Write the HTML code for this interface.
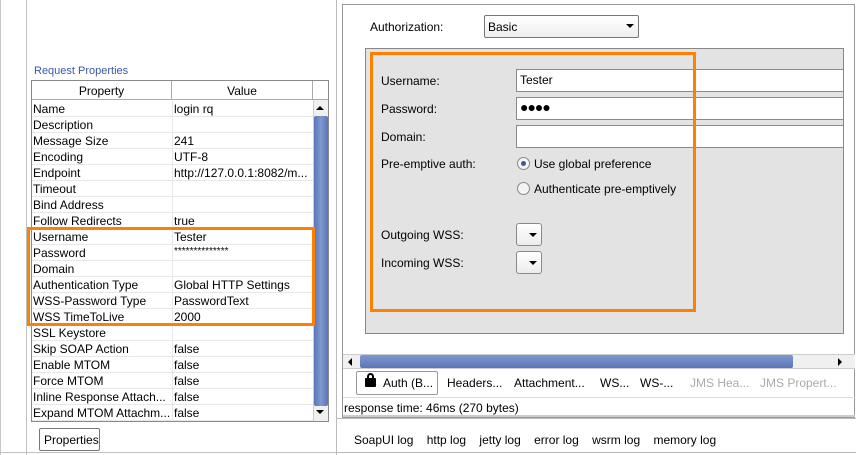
<!DOCTYPE html>
<html><head><style>
*{margin:0;padding:0;box-sizing:border-box}
body{width:856px;height:455px;background:#fff;font-family:"Liberation Sans",sans-serif;font-size:12px;color:#000;position:relative;overflow:hidden}
.a{position:absolute}
.row{position:absolute;left:32px;width:281px;height:16px;border-bottom:1px solid #e8e8e8;white-space:nowrap}
.row span{position:absolute;top:1px;font-size:12px}
.row .k{left:1px}.row .v{left:142px}
.row:after{content:"";position:absolute;left:140px;top:0;height:16px;border-left:1px solid #e8e8e8}
.inp{position:absolute;left:516px;width:328px;height:23px;background:#fff;border:1px solid #8a8a8a;padding:3px 3px;font-size:12px}
.lbl{position:absolute;left:381px;font-size:12px}
.cmb{position:absolute;left:516px;width:26px;height:23px;border:1px solid #8a8a8a;border-radius:3px;background:linear-gradient(#fff,#ececec)}
.tri{position:absolute;width:0;height:0;border-left:4px solid transparent;border-right:4px solid transparent;border-top:4px solid #000}
.rad{position:absolute;left:517px;width:13px;height:13px;border:1px solid #888;border-radius:50%;background:#f4f4f4}
.tab{position:absolute;top:376px;font-size:12px}
</style></head><body>
<div class="a" style="left:0;top:0;width:1px;height:455px;background:#c8c8c8"></div>
<div class="a" style="left:26px;top:0;width:1px;height:455px;background:#c0c0c0"></div>
<div class="a" style="left:0;top:452px;width:336px;height:1px;background:#c0c0c0"></div>
<div class="a" style="left:34px;top:65px;color:#3a58a8;font-size:11px">Request Properties</div>
<div class="a" style="left:31px;top:80px;width:298px;height:342px;border:1px solid #8a8a8a;background:#fff"></div>
<div class="a" style="left:32px;top:81px;width:140px;height:19px;border-right:1px solid #aaa;border-bottom:1px solid #aaa;text-align:center;padding-top:3px">Property</div>
<div class="a" style="left:172px;top:81px;width:141px;height:19px;border-right:1px solid #aaa;border-bottom:1px solid #aaa;text-align:center;padding-top:3px">Value</div>
<div class="a" style="left:313px;top:81px;width:15px;height:19px;border-bottom:1px solid #aaa"></div>
<div class="a" style="left:313px;top:100px;width:15px;height:321px;background:#f0f0f0;border-left:1px solid #ccc"></div>
<div class="tri a" style="left:316px;top:106px;border-top:none;border-bottom:4px solid #000"></div>
<div class="a" style="left:314px;top:116px;width:14px;height:290px;background:linear-gradient(90deg,#5a76b8,#7e98cf,#5a76b8);border-radius:2px"></div>
<div class="tri a" style="left:316px;top:410px"></div>
<div class="row" style="top:101px"><span class="k">Name</span><span class="v">login rq</span></div>
<div class="row" style="top:117px"><span class="k">Description</span></div>
<div class="row" style="top:133px"><span class="k">Message Size</span><span class="v">241</span></div>
<div class="row" style="top:149px"><span class="k">Encoding</span><span class="v">UTF-8</span></div>
<div class="row" style="top:165px"><span class="k">Endpoint</span><span class="v">http://127.0.0.1:8082/m...</span></div>
<div class="row" style="top:181px"><span class="k">Timeout</span></div>
<div class="row" style="top:197px"><span class="k">Bind Address</span></div>
<div class="row" style="top:213px"><span class="k">Follow Redirects</span><span class="v">true</span></div>
<div class="row" style="top:229px"><span class="k">Username</span><span class="v">Tester</span></div>
<div class="row" style="top:245px"><span class="k">Password</span><span class="v" style="font-size:10px">**************</span></div>
<div class="row" style="top:261px"><span class="k">Domain</span></div>
<div class="row" style="top:277px"><span class="k">Authentication Type</span><span class="v">Global HTTP Settings</span></div>
<div class="row" style="top:293px"><span class="k">WSS-Password Type</span><span class="v">PasswordText</span></div>
<div class="row" style="top:309px"><span class="k">WSS TimeToLive</span><span class="v">2000</span></div>
<div class="row" style="top:325px"><span class="k">SSL Keystore</span></div>
<div class="row" style="top:341px"><span class="k">Skip SOAP Action</span><span class="v">false</span></div>
<div class="row" style="top:357px"><span class="k">Enable MTOM</span><span class="v">false</span></div>
<div class="row" style="top:373px"><span class="k">Force MTOM</span><span class="v">false</span></div>
<div class="row" style="top:389px"><span class="k">Inline Response Attach...</span><span class="v">false</span></div>
<div class="row" style="top:405px"><span class="k">Expand MTOM Attachm...</span><span class="v">false</span></div>
<div class="a" style="left:27px;top:227px;width:288px;height:99px;border:3px solid #ff8000"></div>
<div class="a" style="left:39px;top:428px;width:61px;height:23px;border:1px solid #777;border-radius:2px;padding:4px 0 0 4px">Properties</div>
<div class="a" style="left:336px;top:0;width:1px;height:455px;background:#bbb"></div>
<div class="a" style="left:342px;top:4px;width:513px;height:414px;border:1px solid #999;background:#fff"></div>
<div class="a" style="left:336px;top:418px;width:520px;height:1px;background:#bbb"></div>
<div class="a" style="left:336px;top:452px;width:520px;height:1px;background:#bbb"></div>
<div class="a" style="left:370px;top:20px">Authorization:</div>
<div class="a" style="left:484px;top:15px;width:155px;height:23px;border:1px solid #777;border-radius:2px;background:linear-gradient(#fff,#eee);padding:4px 3px">Basic</div>
<div class="tri a" style="left:626px;top:24px"></div>
<div class="a" style="left:365px;top:48px;width:479px;height:286px;background:#e3e3e3;border:1px solid #888"></div>
<div class="lbl" style="top:74px">Username:</div>
<div class="inp" style="top:69px">Tester</div>
<div class="lbl" style="top:102px">Password:</div>
<div class="inp" style="top:97px;font-size:14px;line-height:12px;letter-spacing:-1px">●●●●</div>
<div class="lbl" style="top:130px">Domain:</div>
<div class="inp" style="top:125px"></div>
<div class="lbl" style="top:157px">Pre-emptive auth:</div>
<div class="rad" style="top:157px"><div class="a" style="left:3px;top:3px;width:5px;height:5px;border-radius:50%;background:#3c5a9a"></div></div>
<div class="a" style="left:534px;top:157px">Use global preference</div>
<div class="rad" style="top:182px"></div>
<div class="a" style="left:534px;top:182px">Authenticate pre-emptively</div>
<div class="lbl" style="top:228px">Outgoing WSS:</div>
<div class="cmb" style="top:223px"><div class="tri" style="left:12px;top:9px"></div></div>
<div class="lbl" style="top:256px">Incoming WSS:</div>
<div class="cmb" style="top:251px"><div class="tri" style="left:12px;top:9px"></div></div>
<div class="a" style="left:370px;top:52px;width:326px;height:260px;border:3px solid #ff8000"></div>
<div class="a" style="left:343px;top:354px;width:512px;height:15px;background:#f0f0f0;border-top:1px solid #ccc;border-bottom:1px solid #ccc"></div>
<div class="tri a" style="left:348px;top:358px;border:none;border-top:4px solid transparent;border-bottom:4px solid transparent;border-right:4px solid #000"></div>
<div class="a" style="left:360px;top:355px;width:433px;height:13px;background:linear-gradient(#7e98cf,#5a76b8);border-radius:2px"></div>
<div class="tri a" style="left:838px;top:358px;border:none;border-top:4px solid transparent;border-bottom:4px solid transparent;border-left:4px solid #000"></div>
<div class="a" style="left:356px;top:371px;width:82px;height:24px;border:1px solid #999;border-radius:2px;background:#fff"></div>
<div class="a" style="left:365px;top:378px;width:11px;height:9px;background:#000;border-radius:1px"></div>
<div class="a" style="left:367px;top:373px;width:7px;height:7px;border:2px solid #000;border-bottom:none;border-radius:4px 4px 0 0"></div>
<div class="tab" style="left:383px">Auth (B...</div>
<div class="tab" style="left:447px">Headers...</div>
<div class="tab" style="left:514px">Attachment...</div>
<div class="tab" style="left:600px">WS...</div>
<div class="tab" style="left:640px">WS-...</div>
<div class="tab" style="left:690px;color:#aaa">JMS Hea...</div>
<div class="tab" style="left:760px;color:#aaa">JMS Propert...</div>
<div class="a" style="left:343px;top:397px;width:512px;height:1px;background:#ddd"></div>
<div class="a" style="left:344px;top:401px">response time: 46ms (270 bytes)</div>
<div class="a" style="left:343px;top:415px;width:512px;height:2px;background:#ccc"></div>
<div class="a" style="left:354px;top:433px">SoapUI log&nbsp;&nbsp;&nbsp; http log&nbsp;&nbsp;&nbsp; jetty log&nbsp;&nbsp;&nbsp; error log&nbsp;&nbsp;&nbsp; wsrm log&nbsp;&nbsp;&nbsp; memory log</div>
</body></html>
